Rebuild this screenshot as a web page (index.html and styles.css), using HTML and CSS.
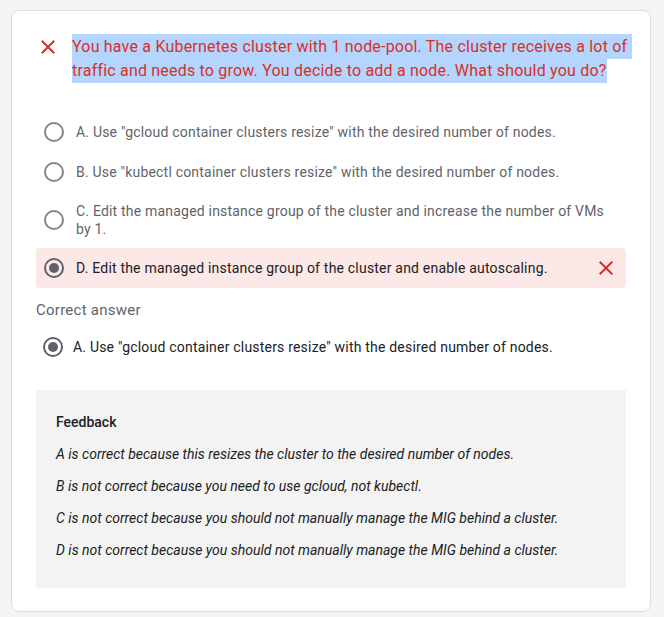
FILE: index.html
```html
<!DOCTYPE html>
<html>
<head>
<meta charset="utf-8">
<link rel="stylesheet" href="styles.css">
</head>
<body>
<div class="card">
  <div class="question">
    <svg class="q-icon" viewBox="0 0 24 24" width="24" height="24"><path fill="#d93025" d="M19 6.41L17.59 5 12 10.59 6.41 5 5 6.41 10.59 12 5 17.59 6.41 19 12 13.41 17.59 19 19 17.59 13.41 12z"/></svg>
    <p class="q-text"><span class="sel">You have a Kubernetes cluster with 1 node-pool. The cluster receives a lot of&nbsp;</span><br><span class="sel">traffic and needs to grow. You decide to add a node. What should you do?</span></p>
  </div>

  <div class="options">
    <div class="option">
      <span class="radio"></span>
      <span class="opt-text">A. Use "gcloud container clusters resize" with the desired number of nodes.</span>
    </div>
    <div class="option">
      <span class="radio"></span>
      <span class="opt-text">B. Use "kubectl container clusters resize" with the desired number of nodes.</span>
    </div>
    <div class="option">
      <span class="radio"></span>
      <span class="opt-text">C. Edit the managed instance group of the cluster and increase the number of VMs by 1.</span>
    </div>
    <div class="option option-wrong">
      <span class="radio radio-on"></span>
      <span class="opt-text">D. Edit the managed instance group of the cluster and enable autoscaling.</span>
      <svg class="wrong-icon" viewBox="0 0 24 24" width="24" height="24"><path fill="#d93025" d="M19 6.41L17.59 5 12 10.59 6.41 5 5 6.41 10.59 12 5 17.59 6.41 19 12 13.41 17.59 19 19 17.59 13.41 12z"/></svg>
    </div>
  </div>

  <div class="correct-label">Correct answer</div>
  <div class="option option-correct">
    <span class="radio radio-on"></span>
    <span class="opt-text">A. Use "gcloud container clusters resize" with the desired number of nodes.</span>
  </div>

  <div class="feedback">
    <div class="fb-title">Feedback</div>
    <p>A is correct because this resizes the cluster to the desired number of nodes.</p>
    <p>B is not correct because you need to use gcloud, not kubectl.</p>
    <p>C is not correct because you should not manually manage the MIG behind a cluster.</p>
    <p>D is not correct because you should not manually manage the MIG behind a cluster.</p>
  </div>
</div>
</body>
</html>
```

FILE: styles.css
```css
* { box-sizing: border-box; }

html, body {
  margin: 0;
  padding: 0;
  background: #f4f4f4;
  font-family: Roboto, "Noto Sans", Arial, sans-serif;
}

.card {
  width: 640px;
  margin: 10px 0 0 11px;
  background: #ffffff;
  border: 1px solid #dadce0;
  border-radius: 8px;
  padding: 24px 24px 23px 24px;
}

.question {
  display: flex;
  align-items: flex-start;
  gap: 12px;
}

.q-icon {
  flex: none;
  display: block;
}

.q-text {
  margin: 0;
  flex: 1;
  font-size: 16px;
  line-height: 24px;
  letter-spacing: 0.2px;
  white-space: nowrap;
  color: #d93025;
}

.sel {
  background: #b4d5fe;
  padding: 3px 0;
  -webkit-box-decoration-break: clone;
  box-decoration-break: clone;
}

.options {
  margin-top: 29px;
}

.option {
  display: flex;
  align-items: center;
  gap: 12px;
  min-height: 40px;
  padding: 10px 8px;
  font-size: 14px;
  line-height: 18px;
  letter-spacing: 0.2px;
  color: #5f6368;
}

.option-wrong {
  background: #fce8e6;
  border-radius: 4px;
  color: #202124;
}

.opt-text { flex: 1; }

.wrong-icon {
  flex: none;
  display: block;
  margin: -3px 0;
}

.radio {
  flex: none;
  width: 20px;
  height: 20px;
  border: 2px solid #80868b;
  border-radius: 50%;
  position: relative;
}

.radio-on {
  border-color: #5f6368;
}

.radio-on::after {
  content: "";
  position: absolute;
  left: 3px;
  top: 3px;
  width: 10px;
  height: 10px;
  border-radius: 50%;
  background: #5f6368;
}

.correct-label {
  margin-top: 12px;
  font-size: 15px;
  line-height: 20px;
  letter-spacing: 0.25px;
  color: #5f6368;
}

.option-correct {
  margin-top: 7px;
  padding-left: 7px;
  gap: 10px;
  color: #202124;
}

.feedback {
  margin-top: 23px;
  background: #f3f3f3;
  padding: 22px 20px 28px 20px;
  color: #202124;
  font-size: 14px;
  line-height: 20px;
}

.fb-title {
  font-weight: 500;
}

.feedback p {
  margin: 12px 0 0 0;
  font-style: italic;
}
```
